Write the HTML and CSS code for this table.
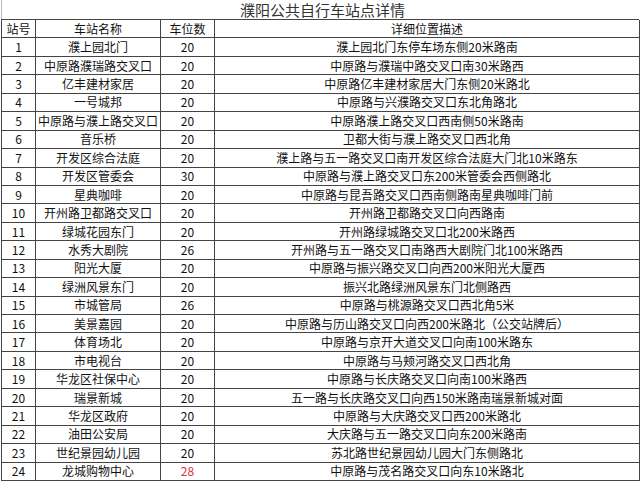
FILE: index.html
```html
<!DOCTYPE html>
<html lang="zh">
<head>
<meta charset="utf-8">
<title>濮阳公共自行车站点详情</title>
<link rel="stylesheet" href="styles.css">
</head>
<body>
<div class="sheet">
  <div class="title">濮阳公共自行车站点详情</div>
  <div class="grid">
    <div class="c">站号</div><div class="c">车站名称</div><div class="c">车位数</div><div class="c">详细位置描述</div>
    <div class="c">1</div><div class="c">濮上园北门</div><div class="c">20</div><div class="c">濮上园北门东停车场东侧20米路南</div>
    <div class="c">2</div><div class="c">中原路濮瑞路交叉口</div><div class="c">20</div><div class="c">中原路与濮瑞中路交叉口南30米路西</div>
    <div class="c">3</div><div class="c">亿丰建材家居</div><div class="c">20</div><div class="c">中原路亿丰建材家居大门东侧20米路北</div>
    <div class="c">4</div><div class="c">一号城邦</div><div class="c">20</div><div class="c">中原路与兴濮路交叉口东北角路北</div>
    <div class="c">5</div><div class="c">中原路与濮上路交叉口</div><div class="c">20</div><div class="c">中原路濮上路交叉口西南侧50米路南</div>
    <div class="c">6</div><div class="c">音乐桥</div><div class="c">20</div><div class="c">卫都大街与濮上路交叉口西北角</div>
    <div class="c">7</div><div class="c">开发区综合法庭</div><div class="c">20</div><div class="c">濮上路与五一路交叉口南开发区综合法庭大门北10米路东</div>
    <div class="c">8</div><div class="c">开发区管委会</div><div class="c">30</div><div class="c">中原路与濮上路交叉口东200米管委会西侧路北</div>
    <div class="c">9</div><div class="c">星典咖啡</div><div class="c">20</div><div class="c">中原路与昆吾路交叉口西南侧路南星典咖啡门前</div>
    <div class="c">10</div><div class="c">开州路卫都路交叉口</div><div class="c">20</div><div class="c">开州路卫都路交叉口向西路南</div>
    <div class="c">11</div><div class="c">绿城花园东门</div><div class="c">20</div><div class="c">开州路绿城路交叉口北200米路西</div>
    <div class="c">12</div><div class="c">水秀大剧院</div><div class="c">26</div><div class="c">开州路与五一路交叉口南路西大剧院门北100米路西</div>
    <div class="c">13</div><div class="c">阳光大厦</div><div class="c">20</div><div class="c">中原路与振兴路交叉口向西200米阳光大厦西</div>
    <div class="c">14</div><div class="c">绿洲风景东门</div><div class="c">20</div><div class="c">振兴北路绿洲风景东门北侧路西</div>
    <div class="c">15</div><div class="c">市城管局</div><div class="c">26</div><div class="c">中原路与桃源路交叉口西北角5米</div>
    <div class="c">16</div><div class="c">美景嘉园</div><div class="c">20</div><div class="c">中原路与历山路交叉口向西200米路北（公交站牌后）</div>
    <div class="c">17</div><div class="c">体育场北</div><div class="c">20</div><div class="c">中原路与京开大道交叉口向南100米路东</div>
    <div class="c">18</div><div class="c">市电视台</div><div class="c">20</div><div class="c">中原路与马颊河路交叉口西北角</div>
    <div class="c">19</div><div class="c">华龙区社保中心</div><div class="c">20</div><div class="c">中原路与长庆路交叉口向南100米路西</div>
    <div class="c">20</div><div class="c">瑞景新城</div><div class="c">20</div><div class="c">五一路与长庆路交叉口向西150米路南瑞景新城对面</div>
    <div class="c">21</div><div class="c">华龙区政府</div><div class="c">20</div><div class="c">中原路与大庆路交叉口西200米路北</div>
    <div class="c">22</div><div class="c">油田公安局</div><div class="c">20</div><div class="c">大庆路与五一路交叉口向东200米路南</div>
    <div class="c">23</div><div class="c">世纪景园幼儿园</div><div class="c">20</div><div class="c">苏北路世纪景园幼儿园大门东侧路北</div>
    <div class="c">24</div><div class="c">龙城购物中心</div><div class="c red">28</div><div class="c">中原路与茂名路交叉口向东10米路北</div>
  </div>
</div>
</body>
</html>
```

FILE: styles.css
```css
html, body {
  margin: 0;
  padding: 0;
  background: #ffffff;
}
body {
  font-family: "Noto Sans CJK SC", "Liberation Sans", sans-serif;
  color: #111;
  width: 640px;
  height: 482px;
  overflow: hidden;
}
.sheet {
  padding-left: 1px;
  width: 638px;
}
.title {
  height: 19px;
  border-left: 1px solid #bbb;
  font-size: 15px;
  line-height: 19px;
  color: #333;
  text-align: center;
  padding-left: 4px;
}
.grid {
  display: grid;
  grid-template-columns: 34px 125px 54px 425px;
  grid-template-rows: repeat(25, 1fr);
  height: 462px;
  border-top: 1px solid #444;
  border-left: 1px solid #444;
  box-sizing: border-box;
}
.c {
  border-right: 1px solid #444;
  border-bottom: 1px solid #444;
  display: flex;
  align-items: center;
  justify-content: center;
  font-size: 12px;
  line-height: 1;
  white-space: nowrap;
  overflow: hidden;
  color: #111;
}
.red {
  color: #e0303a;
}
```
